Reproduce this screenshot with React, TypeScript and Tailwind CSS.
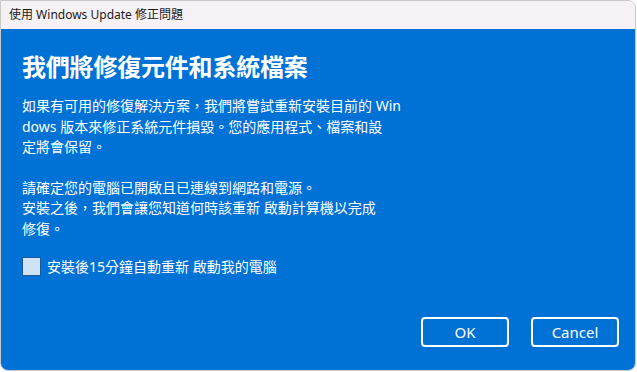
export default function App() {
  const font = { fontFamily: '"Segoe UI", "Noto Sans", "Noto Sans CJK TC", sans-serif' };
  return (
    <div className="w-[637px] h-[372px] bg-white" style={font}>
      <div className="w-[636px] h-[371px] flex flex-col border border-[#c9c9c9] rounded-r-[8px] rounded-bl-[8px] overflow-hidden">
        <div className="h-[28px] bg-[#f6f1f5] flex items-center pl-[8px] text-[12px] text-[#1a1a1a]">
          使用 Windows Update 修正問題
        </div>
        <div className="flex-1 bg-[#0071d5] text-white flex flex-col px-[21px] pt-[22px]">
          <div className="text-[24px] leading-[32px] font-bold tracking-[-0.2px]">我們將修復元件和系統檔案</div>
          <div className="mt-[13px] text-[14px] leading-[20.5px]">
            <div>如果有可用的修復解決方案，我們將嘗試重新安裝目前的 Win</div>
            <div>dows 版本來修正系統元件損毀。您的應用程式、檔案和設</div>
            <div>定將會保留。</div>
            <div className="h-[20px]" />
            <div>請確定您的電腦已開啟且已連線到網路和電源。</div>
            <div>安裝之後，我們會讓您知道何時該重新 啟動計算機以完成</div>
            <div>修復。</div>
          </div>
          <div className="mt-[17px] flex items-center gap-[6px] text-[14px]">
            <div className="w-[19px] h-[19px] bg-[#cfe2f6] border border-[#1a5a9c]" />
            <span>安裝後15分鐘自動重新 啟動我的電腦</span>
          </div>
          <div className="flex-1" />
          <div className="flex justify-end gap-[22px] pb-[23px] -mr-[5px]">
            <button className="w-[88px] h-[30px] border-2 border-white rounded-[4px] text-[15px] text-white flex items-center justify-center">OK</button>
            <button className="w-[88px] h-[30px] border-2 border-white rounded-[4px] text-[15px] text-white flex items-center justify-center">Cancel</button>
          </div>
        </div>
      </div>
    </div>
  );
}
